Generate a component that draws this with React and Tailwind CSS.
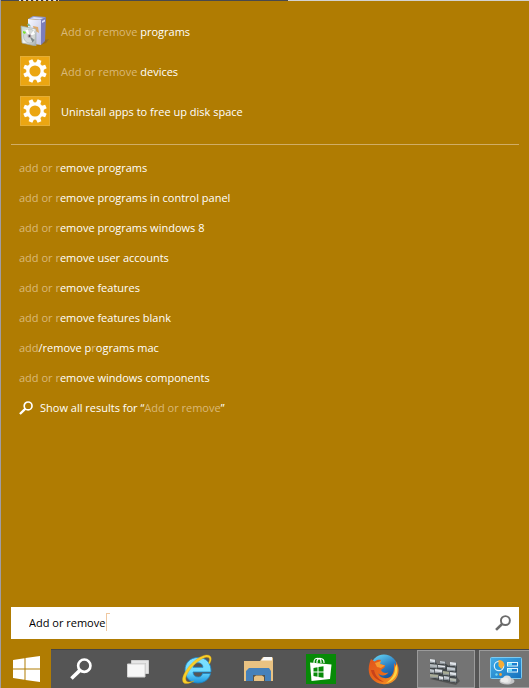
import React from "react";

const apps = [
  { icon: "programs", match: "Add or remove", rest: " programs" },
  { icon: "gear", match: "Add or remove", rest: " devices" },
  { icon: "gear", match: "", rest: "Uninstall apps to free up disk space" },
];

const suggestions = [
  [["add or r", true], ["emove programs", false]],
  [["add or r", true], ["emove programs in control panel", false]],
  [["add or r", true], ["emove programs windows 8", false]],
  [["add or r", true], ["emove user accounts", false]],
  [["add or r", true], ["emove features", false]],
  [["add or r", true], ["emove features blank", false]],
  [["add", true], ["/remove p", false], ["r", true], ["ograms mac", false]],
  [["add or r", true], ["emove windows components", false]],
];

function Dim({ children }) {
  return <span className="text-[#dab978]">{children}</span>;
}

function GearIcon() {
  return (
    <svg viewBox="0 0 30 30" className="size-[30px] shrink-0" aria-hidden="true">
      <rect width="30" height="30" fill="#e5ae35" />
      <rect x="1" y="1" width="28" height="28" fill="#eba612" />
      <g fill="#fff">
        {[22.5, 67.5, 112.5, 157.5, 202.5, 247.5, 292.5, 337.5].map((a) => (
          <path key={a} d="M12.6 7.5 L13 3.200 H17 L17.400 7.5Z" transform={`rotate(${a} 15 15)`} />
        ))}
      </g>
      <circle cx="15" cy="15" r="7.2" fill="none" stroke="#fff" strokeWidth="3.2" />
    </svg>
  );
}

function ProgramsIcon() {
  return (
    <svg viewBox="0 0 30 30" className="size-[30px] shrink-0" aria-hidden="true">
      <defs>
        <linearGradient id="boxFront" x1="0" x2="1" y2="1">
          <stop offset="0" stopColor="#f7f8ff" />
          <stop offset="1" stopColor="#bfc2e2" />
        </linearGradient>
        <linearGradient id="discCase" x1="0" x2="1" y2="1">
          <stop offset="0" stopColor="#b9d5cc" />
          <stop offset="0.5" stopColor="#f2f4f2" />
          <stop offset="1" stopColor="#9fa8aa" />
        </linearGradient>
      </defs>
      <path d="M24 24 L29 23 L26 27 L17 30Z" fill="#80602a" opacity="0.6" />
      <path d="M8 3 L13 0 L26 1 L22 4Z" fill="#9199ce" />
      <path d="M8 3 L21 4 V29 L8 27Z" fill="url(#boxFront)" />
      <path d="M21 4 L26 1 L25 25 L21 29Z" fill="#7c7eba" />
      <path d="M22 5 L25 3.500 V5.500 L22 7Z" fill="#d8dcf6" />
      <path d="M10 2.5 L14 1 L23 2 L20 3.5Z" fill="#dbe1fa" />
      <path d="M13 10 L18 11 L19 17 L14 14Z" fill="#dfa969" />
      <path d="M1 10 L16 13 V30 L2 27Z" fill="url(#discCase)" stroke="#a3aaab" strokeWidth="0.7" />
      <ellipse cx="9.5" cy="20" rx="6" ry="7" fill="#d6dad8" stroke="#a8b0b0" strokeWidth="0.6" />
      <path d="M9.5 20 L5 14.5 L8 13.2Z" fill="#fff" />
      <path d="M9.5 20 L14.5 24 L12.5 26.5Z" fill="#7c8688" />
      <path d="M9.5 20 L13.500 14.500 L15 18Z" fill="#fff" />
      <circle cx="9.5" cy="20" r="2" fill="#b3a7b2" />
      <circle cx="9.5" cy="20" r="0.9" fill="#4b4f4f" />
      <path d="M3 15 L6 16 L5 18 L3 17Z" fill="#7be22c" />
      <path d="M7 8 L9 7.5 L11 10.500 L8 10Z" fill="#7fb896" />
    </svg>
  );
}

function Magnifier({ className }) {
  return (
    <svg viewBox="0 0 20 20" className={className} fill="none" stroke="currentColor" aria-hidden="true">
      <circle cx="13" cy="7" r="5.600" strokeWidth="2.4" />
      <path d="M9.200 11 L1.300 18.600" strokeWidth="3.3" />
    </svg>
  );
}

function WindowsLogo() {
  return (
    <svg viewBox="0 0 27 26" className="h-[26px] w-[27px]" fill="#fff" aria-hidden="true">
      <path d="M0 4 L11.5 2.2 V12.4 H0Z M12.5 2 L27 0 V12.4 H12.5Z M0 13.4 H11.5 V23.8 L0 22Z M12.5 13.4 H27 V26 L12.5 24Z" />
    </svg>
  );
}

function TaskView() {
  return (
    <svg viewBox="0 0 22 18" className="h-[18px] w-[22px]" aria-hidden="true">
      <path d="M4.5 0.5 H21.5 V13.5 H18.5 V3.5 H4.5Z" fill="#e6e6e6" stroke="#cfcfcf" />
      <path d="M0.5 4 H18 V17 H0.5Z" fill="#f7f7f7" stroke="#d4d4d4" />
    </svg>
  );
}

function Explorer() {
  return (
    <svg viewBox="0 0 30 26" className="h-[26px] w-[30px]" aria-hidden="true">
      <path d="M0 5 H16 L19 1 H28 L29 2 V25 H0Z" fill="#e9c282" />
      <path d="M17 4.5 L20 1 H28 V4.5Z" fill="#fafafa" />
      <path d="M2 25 V15 L5 12 H25 L27 15 V25 H21 V19 H9 V25Z" fill="#4681ba" />
      <path d="M9 25 V19 H21 V25Z" fill="#55534d" />
      <path d="M10 25 V21 L12 19.5 H18 L20 21 V25Z" fill="#e9c282" />
    </svg>
  );
}

function InternetExplorer() {
  return (
    <svg viewBox="0 0 31 31" className="size-[31px]" aria-hidden="true">
      <defs>
        <linearGradient id="ieBlue" x2="0" y2="1">
          <stop stopColor="#7fdfff" />
          <stop offset="0.55" stopColor="#6fdcff" />
          <stop offset="1" stopColor="#1b93dd" />
        </linearGradient>
      </defs>
      <path d="M28.500 19.500 C27 25.500 22 29 16 29 C8 29 3 23.500 3 16 C3 8.500 8.500 3.500 16 3.500 C24.500 3.500 29.500 9.500 29 18 H11 C11.300 21.500 13.300 23 16.300 23 C18.500 23 19.800 21.800 20.500 19.500Z M11 13.300 H21 C20.700 10.500 19 8.800 16 8.800 C13 8.800 11.500 10.500 11 13.300Z" fill="url(#ieBlue)" stroke="#1c86c8" strokeWidth="0.8" fillRule="evenodd" />
      <path d="M27.500 10 C31 4 29 0 23 1.200 C14 3 3 15 0.700 24 C-0.500 30.500 5 31 12 27 C5.500 29.500 2.500 27.500 4.200 22 C7.500 14 17 5.500 23 3.600 C27.500 2.500 28.500 5 26.500 8.700Z" fill="#f9cf2a" stroke="#dca411" strokeWidth="0.4" />
    </svg>
  );
}

function Store() {
  return (
    <svg viewBox="0 0 30 30" className="size-[30px]" aria-hidden="true">
      <rect width="30" height="30" fill="#078a07" />
      <path d="M8 10 V8 C8 3 15 3 15 8 V9 M11 9 V7 C12 3 18 4 18 8 V9" fill="none" stroke="#fff" strokeWidth="1.2" />
      <path d="M4 8.500 L25.500 10.500 L24 25 L5.500 27Z" fill="#fff" />
      <path d="M7.500 14 L11.500 13.300 V17.500 H7.500Z M12.500 13 L17.500 12.300 V17.500 H12.500Z M7.500 18.500 H11.500 V22.700 L7.500 22Z M12.500 18.500 H17.500 V23.700 L12.500 22.900Z" fill="#078a07" />
    </svg>
  );
}

function Firefox() {
  return (
    <svg viewBox="0 0 31 31" className="size-[31px]" aria-hidden="true">
      <defs>
        <linearGradient id="foxGlobe" x1="0.3" y1="0" x2="0.8" y2="1">
          <stop stopColor="#5fcdf2" />
          <stop offset="0.5" stopColor="#2878be" />
          <stop offset="1" stopColor="#123f86" />
        </linearGradient>
        <linearGradient id="foxFur" x2="1" y2="1">
          <stop stopColor="#e0561c" />
          <stop offset="0.55" stopColor="#ea6a1a" />
          <stop offset="1" stopColor="#f9a82a" />
        </linearGradient>
      </defs>
      <circle cx="16" cy="14" r="13.500" fill="url(#foxGlobe)" />
      <path d="M3 5 L6.500 7.500 C9 5.500 11 5.500 13 6 C11.500 8 11.500 9 12 10 L17 11.500 C17.500 13.500 14 14.500 13 16 C14 18.500 17 19.500 20.500 18.500 C17.500 22.500 12 22 10 19 C12 25 20.500 26 24 21 C26.500 17.500 26 13 26 9 L28 12 C28.500 9 28 7.500 27 6 C31 11 31.500 17 29.500 22 C26.500 28.500 20 31 14.500 30 C6 29 0.500 23 0.700 15 C0.800 11 1.700 8 3 5Z" fill="url(#foxFur)" />
      <path d="M28.500 10 C31.500 18 27.500 27 18 29 C24 25 27 20 27 14Z" fill="#fbd344" />
      <path d="M3 16 C4 22 9 27 16 28 C10 25 7 21 6 16Z" fill="#c8421a" />
      <path d="M7 9 L13 7 L12 10 L17 11.500 L13 14 L9 13Z" fill="#f59a30" />
    </svg>
  );
}

function Firewall() {
  const bricks = [
    [1, 1, 5, 4, "#dde1e6"], [11, 3, 5, 3, "#c2c8cd"], [21, 4, 6, 4, "#dfe3e8"],
    [1, 6, 7, 4, "#b3b9bc"], [9, 7, 7, 3, "#e4e7ec"], [18, 9, 8, 4, "#c4cbd1"],
    [1, 11, 4, 4, "#bfc6cc"], [6, 11, 7, 4, "#dce0e6"], [14, 13, 6, 4, "#a8ac96"], [21, 14, 6, 4, "#dee3e8"],
    [1, 16, 8, 4, "#a9ad99"], [10, 18, 4, 4, "#e0e4e9"], [15, 18, 5, 4, "#c4cad2"], [21, 20, 6, 4, "#b7bcb2"],
  ];
  return (
    <svg viewBox="0 0 31 27" className="h-[27px] w-[31px]" aria-hidden="true">
      <path d="M1 21 L27 27 L31 23 L27 18Z" fill="#444" opacity="0.65" />
      <path d="M1 2 L6 2 L8 6 L11 6 L12 4 L17 6 L20 8 L22 5 L28 6 V25 L14 23 L1 20Z" fill="#414649" />
      {bricks.map(([x, y, w, h, c]) => (
        <g key={`${x}-${y}`}>
          <path d={`M${x} ${y} l${w} 0.8 v${h - 0.5} l-${w} -0.8Z`} fill={c} />
          <path d={`M${x} ${y + h - 1.5} l${w} 0.8 v1 l-${w} -0.8Z`} fill="#878e94" />
          <path d={`M${x + w} ${y + 0.8} l0.8 -0.7 v${h - 0.5} l-0.8 0.7Z`} fill="#666c72" />
        </g>
      ))}
    </svg>
  );
}

function ControlPanel() {
  return (
    <svg viewBox="0 0 32 28" className="h-7 w-8" aria-hidden="true">
      <defs>
        <linearGradient id="panelBlue" x2="1" y2="1">
          <stop stopColor="#44aee8" />
          <stop offset="1" stopColor="#1571bd" />
        </linearGradient>
      </defs>
      <rect x="0.500" y="0.500" width="31" height="21" rx="1" fill="url(#panelBlue)" stroke="#7dcaf1" />
      <circle cx="9" cy="9" r="4.700" fill="#259ade" stroke="#d8f0fc" strokeWidth="1.200" />
      <path d="M8.500 9 V3 A6 6 0 0 1 14.500 8 L11.500 12Z" fill="#f6ad35" />
      <rect x="17.500" y="5.500" width="10" height="3.500" fill="#1b7fd0" stroke="#e5f6fd" />
      <rect x="17.500" y="11.500" width="10" height="3.500" fill="#1b7fd0" stroke="#e5f6fd" />
      <rect x="18" y="6" width="4" height="2.500" fill="#70dffd" />
      <rect x="18" y="12" width="4" height="2.500" fill="#70dffd" />
      <circle cx="6.500" cy="17.500" r="1.200" fill="#72d8f4" />
      <circle cx="10.500" cy="17.500" r="1.400" fill="#f6a035" />
      <ellipse cx="17" cy="24" rx="7.500" ry="3.600" fill="#c4c5c7" />
      <circle cx="17" cy="22.500" r="4" fill="#dddedf" />
      <ellipse cx="14.500" cy="23" rx="4" ry="2.500" fill="#ececec" />
    </svg>
  );
}

const pinned = [
  ["Internet Explorer", InternetExplorer],
  ["File Explorer", Explorer],
  ["Store", Store],
  ["Firefox", Firefox],
];

const running = [
  ["Firewall", Firewall],
  ["Control Panel", ControlPanel],
];

export default function App() {
  return (
    <div className="flex min-h-screen flex-col overflow-hidden border-l border-[#a09da3] bg-[#b07c02] font-['Open_Sans','Noto_Sans',sans-serif] text-[11px] leading-4 text-white">
      <div className="flex h-px bg-[#48494e]" aria-hidden="true">
        <div className="ml-[18px] w-10 bg-[repeating-linear-gradient(90deg,#d5e8f5_0_2px,#362b35_2px_4px,#f1c28c_4px_5px)]" />
        <div className="ml-[229px] flex-1 bg-[#d2d2d2]" />
      </div>

      <main className="flex flex-1 flex-col px-2.5 pt-[15px] pb-2.5">
        <ul className="flex flex-col gap-2.5 px-[9px]">
          {apps.map(({ icon, match, rest }) => (
            <li key={rest}>
              <button type="button" className="flex w-full items-center gap-[11px] text-left">
                {icon === "gear" ? <GearIcon /> : <ProgramsIcon />}
                <span className="whitespace-pre pt-0.5">
                  <Dim>{match}</Dim>
                  {rest}
                </span>
              </button>
            </li>
          ))}
        </ul>

        <hr className="mt-[18px] mb-2 border-[#d0ad66]" />

        <ul className="px-2">
          {suggestions.map((parts, i) => (
            <li key={i}>
              <button type="button" className="h-[30px] w-full text-left">
                {parts.map(([text, dim], j) => (dim ? <Dim key={j}>{text}</Dim> : <span key={j}>{text}</span>))}
              </button>
            </li>
          ))}
          <li>
            <button type="button" className="flex h-[30px] w-full items-center gap-[7px] text-left">
              <Magnifier className="size-3.5" />
              <span>
                Show all results for “<Dim>Add or remove</Dim>”
              </span>
            </button>
          </li>
        </ul>

        <form className="relative mt-auto flex h-8 items-center bg-white pr-2 pl-[18px]" onSubmit={(e) => e.preventDefault()}>
          <input
            type="text"
            aria-label="Search"
            defaultValue="Add or remove"
            className="min-w-0 flex-1 bg-transparent text-black outline-none"
          />
          <span className="absolute top-1.5 left-[95px] h-[18px] w-1 border-t border-l border-[#f0c8a0]" aria-hidden="true" />
          <button type="submit" aria-label="Search" className="text-[#6b6b6b]">
            <Magnifier className="size-4" />
          </button>
        </form>
      </main>

      <nav aria-label="Taskbar" className="flex h-[39px] overflow-hidden bg-[#555555]">
        <button type="button" aria-label="Start" className="flex w-[50px] shrink-0 items-center justify-center bg-[#b07c02]">
          <WindowsLogo />
        </button>
        <div className="flex flex-1 gap-1 border-t border-[#444444]">
          <div className="flex shrink-0">
            <button type="button" aria-label="Search" className="flex w-15 items-center justify-center">
              <Magnifier className="size-[22px]" />
            </button>
            <button type="button" aria-label="Task view" className="flex w-[54px] items-center justify-center">
              <TaskView />
            </button>
          </div>
          {pinned.map(([name, Icon]) => (
            <button key={name} type="button" aria-label={name} className="flex w-[58px] shrink-0 items-center justify-center pr-0.5">
              <Icon />
            </button>
          ))}
          {running.map(([name, Icon]) => (
            <button
              key={name}
              type="button"
              aria-label={name}
              className="flex w-[58px] shrink-0 items-center justify-center border border-[#9b9b9b] bg-[#747474] pt-1 pr-1"
            >
              <Icon />
            </button>
          ))}
        </div>
      </nav>
    </div>
  );
}
